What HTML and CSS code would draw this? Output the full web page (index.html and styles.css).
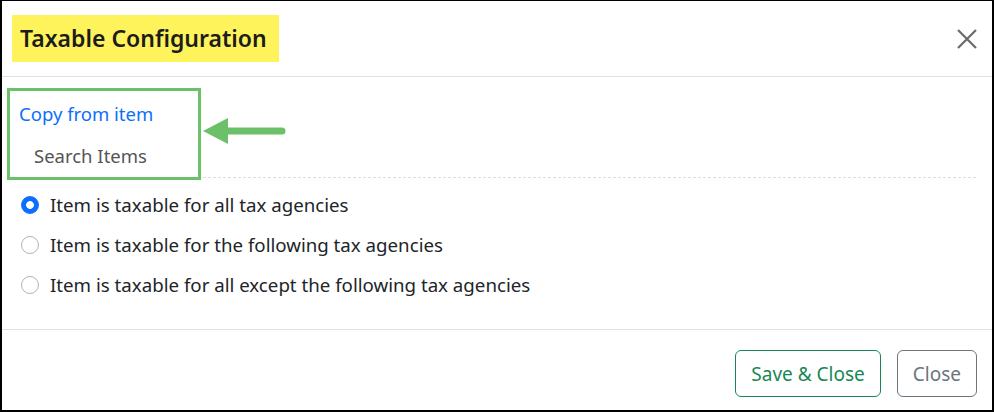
FILE: index.html
```html
<!DOCTYPE html>
<html>
<head>
    <title>Taxable Configuration</title>
    <link rel="stylesheet" href="styles.css">
</head>
<body>
    <div class="modal">
        <div class="modal-header">
            <h2 class="modal-title">Taxable Configuration</h2>
            <button class="btn-close" aria-label="Close">
                <svg width="22" height="22" viewBox="0 0 22 22">
                    <path d="M2 2 L20 20 M20 2 L2 20" stroke="#6b6b6b" stroke-width="2.2" fill="none"/>
                </svg>
            </button>
        </div>

        <div class="modal-body">
            <div class="copy-section">
                <a href="#" class="copy-link">Copy from item</a>
                <div class="search-items">Search Items</div>

                <div class="note-box"></div>
                <svg class="note-arrow" width="84" height="26" viewBox="0 0 84 26">
                    <line x1="22" y1="13" x2="79" y2="13" stroke="#6cc06a" stroke-width="7" stroke-linecap="round"/>
                    <polygon points="0,13 25,0 25,26" fill="#6cc06a"/>
                </svg>
            </div>

            <div class="tax-options">
                <label class="radio-row">
                    <input type="radio" name="taxable" checked>
                    <span>Item is taxable for all tax agencies</span>
                </label>
                <label class="radio-row">
                    <input type="radio" name="taxable">
                    <span>Item is taxable for the following tax agencies</span>
                </label>
                <label class="radio-row">
                    <input type="radio" name="taxable">
                    <span>Item is taxable for all except the following tax agencies</span>
                </label>
            </div>
        </div>

        <div class="modal-footer">
            <button class="btn btn-save">Save &amp; Close</button>
            <button class="btn btn-cancel">Close</button>
        </div>
    </div>
</body>
</html>
```

FILE: styles.css
```css
* {
    margin: 0;
    padding: 0;
    box-sizing: border-box;
}

body {
    background-color: #fff;
    color: #212529;
    font-family: 'Noto Sans', 'Open Sans', sans-serif;
}

.modal {
    width: 994px;
    height: 412px;
    border-style: solid;
    border-color: #000;
    border-width: 1px 2px 2px 2px;
    display: flex;
    flex-direction: column;
}

.modal-header {
    height: 76px;
    display: flex;
    align-items: center;
    justify-content: space-between;
    padding: 0 14px 0 10px;
    border-bottom: 1px solid #dee2e6;
}

.modal-title {
    background-color: #fff35c;
    font-size: 23px;
    font-weight: 600;
    color: #1c1c1c;
    padding: 6px 12px 7px 8px;
    line-height: 34px;
}

.btn-close {
    background: none;
    border: none;
    width: 22px;
    height: 22px;
    cursor: pointer;
}

.modal-body {
    flex: 1;
    padding: 0 16px;
}

.copy-section {
    position: relative;
    padding: 24px 0 8px 1px;
    border-bottom: 1px dashed #dcdcdc;
}

.copy-link {
    display: block;
    color: #0d6efd;
    text-decoration: none;
    font-size: 18.5px;
    line-height: 26px;
}

.search-items {
    color: #555;
    font-size: 18.5px;
    line-height: 26px;
    padding: 16px 0 0 15px;
}

/* annotation */
.note-box {
    position: absolute;
    left: -11px;
    top: 11px;
    width: 194px;
    height: 92px;
    border: 3px solid #6cc06a;
}

.note-arrow {
    position: absolute;
    left: 185px;
    top: 41px;
}

.tax-options {
    padding-top: 14px;
    display: flex;
    flex-direction: column;
    gap: 14px;
}

.radio-row {
    display: flex;
    align-items: center;
    gap: 11px;
    font-size: 18.7px;
    line-height: 26px;
    padding-left: 3px;
}

.radio-row input {
    appearance: none;
    -webkit-appearance: none;
    width: 18px;
    height: 18px;
    border: 1px solid #adb5bd;
    border-radius: 50%;
    background: #fff;
    margin: 0;
    flex-shrink: 0;
}

.radio-row input:checked {
    border-color: #0d6efd;
    background: radial-gradient(circle, #fff 0 3.5px, #0d6efd 4.2px);
}

.modal-footer {
    height: 81px;
    border-top: 1px solid #dee2e6;
    display: flex;
    align-items: center;
    justify-content: flex-end;
    gap: 16px;
    padding: 7px 15px 0 0;
}

.btn {
    height: 47px;
    padding: 0 15px;
    font-family: inherit;
    font-size: 19px;
    background: #fff;
    border-radius: 6px;
    cursor: pointer;
}

.btn-save {
    color: #198754;
    border: 1px solid #198754;
}

.btn-cancel {
    color: #6c757d;
    border: 1px solid #6c757d;
}
```
